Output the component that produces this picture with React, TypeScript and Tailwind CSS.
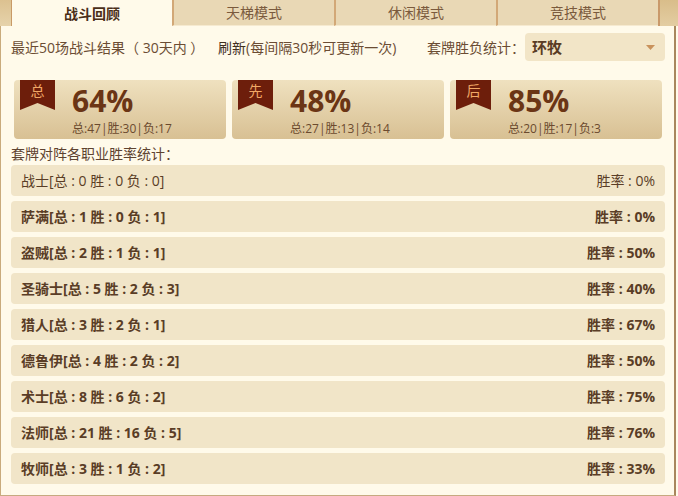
import React from "react"

const tabs = ["战斗回顾", "天梯模式", "休闲模式", "竞技模式"]

const stats = [
  { tag: "总", pct: "64%", detail: "总:47|胜:30|负:17" },
  { tag: "先", pct: "48%", detail: "总:27|胜:13|负:14" },
  { tag: "后", pct: "85%", detail: "总:20|胜:17|负:3" },
]

const rows = [
  { name: "战士", total: 0, win: 0, lose: 0, rate: "0%" },
  { name: "萨满", total: 1, win: 0, lose: 1, rate: "0%" },
  { name: "盗贼", total: 2, win: 1, lose: 1, rate: "50%" },
  { name: "圣骑士", total: 5, win: 2, lose: 3, rate: "40%" },
  { name: "猎人", total: 3, win: 2, lose: 1, rate: "67%" },
  { name: "德鲁伊", total: 4, win: 2, lose: 2, rate: "50%" },
  { name: "术士", total: 8, win: 6, lose: 2, rate: "75%" },
  { name: "法师", total: 21, win: 16, lose: 5, rate: "76%" },
  { name: "牧师", total: 3, win: 1, lose: 2, rate: "33%" },
]

function Ribbon({ tag }: { tag: string }) {
  return (
    <div className="absolute left-[6px] top-0 w-[35px] h-[30px]">
      <svg width="35" height="30" viewBox="0 0 35 30" className="absolute inset-0">
        <polygon points="0,0 35,0 35,30 17.5,23 0,30" fill="#6d1e0b" />
      </svg>
      <span className="relative block text-center text-[14px] leading-[22px] text-[#f2a866]">{tag}</span>
    </div>
  )
}

export default function App() {
  return (
    <div
      className="w-[678px] h-[496px] bg-[#fffaea] text-[#6b4c33] overflow-hidden"
      style={{ fontFamily: '"Open Sans", "Noto Sans CJK SC", sans-serif' }}
    >
      {/* Tabs */}
      <div className="flex h-[26px]">
        <div className="w-[12px] bg-gradient-to-b from-[#dcc190] to-[#e6d3ab] border-r border-[#c99a66]" />
        {tabs.map((t, i) =>
          i === 0 ? (
            <div
              key={t}
              className="w-[160px] bg-[#fffaea] rounded-tl-[3px] flex items-center justify-center text-[14px] font-bold text-[#4a2e18]"
            >
              {t}
            </div>
          ) : (
            <div
              key={t}
              className="w-[162px] bg-[#e9d8b5] border-l-2 border-[#d2a877] border-b border-b-[#f6ead0] flex items-center justify-center text-[14px] text-[#7a5a3d]"
            >
              {t}
            </div>
          )
        )}
        <div className="flex-1 bg-gradient-to-b from-[#d9bd8a] to-[#e3cda2] border-l-2 border-[#c9996a]" />
      </div>

      {/* Body */}
      <div className="w-[676px] h-[470px] border-l border-r-2 border-b border-[#c9ab7c] border-r-[#a8865c] border-b-[#c6aa80]">
        {/* Header line */}
        <div className="flex items-center h-[35px] pt-[7px] pl-[10px] pr-[9px] text-[14px]">
          <span className="w-[207px] whitespace-nowrap">最近50场战斗结果（ 30天内 ）</span>
          <span className="text-[#3f2f1f]">刷新</span>
          <span className="whitespace-nowrap">(每间隔30秒可更新一次)</span>
          <span className="ml-auto whitespace-nowrap">套牌胜负统计：</span>
          <div className="w-[140px] shrink-0 h-[28px] rounded-[4px] bg-[#f2e5c7] flex items-center pl-[7px] pr-[10px]">
            <span className="text-[15px] font-bold text-[#5a3c24]">环牧</span>
            <svg width="9" height="5" viewBox="0 0 9 5" className="ml-auto">
              <polygon points="0,0 9,0 4.5,5" fill="#c9925c" />
            </svg>
          </div>
        </div>

        {/* Stat cards */}
        <div className="flex gap-[6px] pl-[13px] mt-[19px]">
          {stats.map((s) => (
            <div
              key={s.tag}
              className="relative w-[212px] h-[59px] rounded-[4px] bg-gradient-to-b from-[#efe1bf] to-[#d8c093]"
            >
              <Ribbon tag={s.tag} />
              <div className="pl-[58px] pt-[4px] text-[30px] font-bold leading-[34px] text-[#6b3515]">{s.pct}</div>
              <div className="pl-[58px] pt-[3px] text-[12px] leading-[16px] text-[#6b4a2e]">{s.detail}</div>
            </div>
          ))}
        </div>

        <div className="pl-[10px] mt-[5px] text-[14px] leading-[20px] text-[#5e4330]">套牌对阵各职业胜率统计：</div>

        {/* Rows */}
        <div className="flex flex-col gap-[5px] pl-[10px] pr-[9px] mt-[1px]">
          {rows.map((r, i) => (
            <div
              key={r.name}
              className={`h-[31px] rounded-[4px] bg-[#f1e5c8] flex items-center justify-between pl-[10px] pr-[10px] text-[14px] text-[#5a3d26] ${
                i === 0 ? "font-normal" : "font-bold"
              }`}
            >
              <span>
                {r.name}[总 : {r.total} 胜 : {r.win} 负 : {r.lose}]
              </span>
              <span>胜率 : {r.rate}</span>
            </div>
          ))}
        </div>
      </div>
    </div>
  )
}
